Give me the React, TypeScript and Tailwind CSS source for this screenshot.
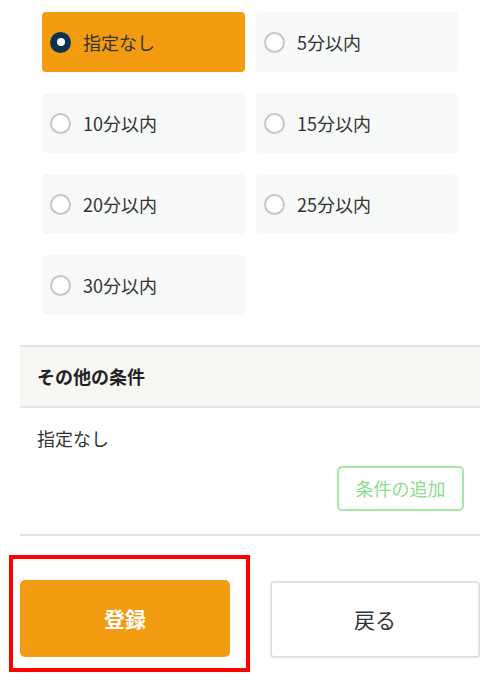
import React from "react";

const options = ["指定なし", "5分以内", "10分以内", "15分以内", "20分以内", "25分以内", "30分以内"];

function Radio({ checked }: { checked: boolean }) {
  if (checked) {
    return (
      <span className="flex h-[21px] w-[21px] shrink-0 items-center justify-center rounded-full bg-[#0f3150]">
        <span className="h-[8px] w-[8px] rounded-full bg-white" />
      </span>
    );
  }
  return <span className="h-[21px] w-[21px] shrink-0 rounded-full border-2 border-[#c3c6cc] bg-white" />;
}

export default function App() {
  return (
    <div
      className="relative w-[500px] h-[700px] bg-white text-[#333]"
      style={{ fontFamily: '"Noto Sans CJK JP", "Noto Sans", sans-serif' }}
    >
      <div className="px-[42px] pt-[12px]">
        <div className="grid grid-cols-[203px_202px] gap-x-[11px] gap-y-[21px]">
          {options.map((o, i) => (
            <div
              key={o}
              className={
                "flex h-[60px] items-center gap-[12px] rounded-[4px] pl-[8px] " +
                (i === 0 ? "bg-[#f39c12]" : "bg-[#f7f8f8]")
              }
            >
              <Radio checked={i === 0} />
              <span className="text-[18px] leading-none text-[#333]">{o}</span>
            </div>
          ))}
        </div>
      </div>

      <div className="mx-[20px] mt-[30px]">
        <div className="flex h-[63px] items-center border-y-2 border-[#e4e4ea] bg-[#f6f6f2] pl-[17px]">
          <span className="mb-[2px] text-[18px] font-bold leading-none text-[#222]">その他の条件</span>
        </div>
        <div className="border-b-2 border-[#e4e4ea] pb-[23px]">
          <div className="pl-[17px] pt-[21px] text-[18px] leading-none text-[#333]">指定なし</div>
          <div className="mt-[19px] flex justify-end pr-[16px]">
            <div className="flex h-[45px] w-[127px] items-center justify-center rounded-[5px] border-2 border-[#a3e8a3] text-[18px] text-[#8edc8e]">
              条件の追加
            </div>
          </div>
        </div>
      </div>

      <div className="mx-[20px] mt-[44px] flex gap-[40px]">
        <div className="flex h-[77px] w-[210px] items-center justify-center rounded-[5px] bg-[#f39c12] text-[21px] font-bold text-white">
          登録
        </div>
        <div className="mt-[1px] flex h-[77px] w-[210px] items-center justify-center rounded-[4px] border-2 border-[#dde1e6] bg-white text-[21px] text-[#333]">
          戻る
        </div>
      </div>

      <div className="absolute left-[9px] top-[555px] h-[117px] w-[241px] border-4 border-[#ff0000]" />
    </div>
  );
}
